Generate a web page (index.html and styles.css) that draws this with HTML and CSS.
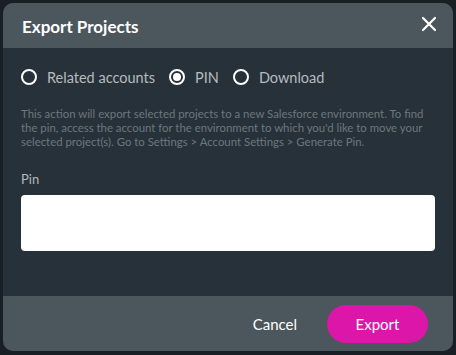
FILE: index.html
```html
<!DOCTYPE html>
<html lang="en">

<head>
	<meta charset="UTF-8">
	<meta name="viewport" content="width=device-width, initial-scale=1.0">
	<title>Export Projects</title>
	<link rel="stylesheet" href="styles.css">
</head>

<body>
	<div class="modal">
		<div class="modal-header">
			<h2>Export Projects</h2>
			<button class="close" aria-label="Close">
				<svg width="16" height="16" viewBox="0 0 16 16">
					<path d="M2 2 L14 14 M14 2 L2 14" stroke="#fff" stroke-width="2.2" stroke-linecap="round" fill="none" />
				</svg>
			</button>
		</div>

		<div class="modal-body">
			<div class="options">
				<label class="option"><span class="radio"></span>Related accounts</label>
				<label class="option"><span class="radio checked"></span>PIN</label>
				<label class="option"><span class="radio"></span>Download</label>
			</div>

			<p class="hint">This action will export selected projects to a new Salesforce environment. To find the pin, access the account for the environment to which you'd like to move your selected project(s). Go to Settings &gt; Account Settings &gt; Generate Pin.</p>

			<label class="field-label" for="pin">Pin</label>
			<input type="text" id="pin" class="pin-input">
		</div>

		<div class="modal-footer">
			<button class="btn-cancel">Cancel</button>
			<button class="btn-export">Export</button>
		</div>
	</div>
</body>

</html>
```

FILE: styles.css
```css
* {
	margin: 0;
	padding: 0;
	box-sizing: border-box;
}

body {
	font-family: Lato, 'Open Sans', sans-serif;
	background: #182026;
	padding: 3px;
	height: 355px;
}

.modal {
	width: 450px;
	height: 348px;
	border-radius: 10px;
	overflow: hidden;
	background: #27313a;
	display: flex;
	flex-direction: column;
}

.modal-header {
	height: 45px;
	background: #4b575d;
	display: flex;
	align-items: center;
	justify-content: space-between;
	padding: 2px 14px 0 19px;
}

.modal-header h2 {
	color: #fff;
	font-size: 17px;
	font-weight: 700;
}

.close {
	background: none;
	border: none;
	width: 20px;
	height: 20px;
	display: flex;
	align-items: center;
	justify-content: center;
	margin-top: -6px;
}

.modal-body {
	flex: 1;
	padding: 20px 18px 0 18px;
}

.options {
	display: flex;
	gap: 14px;
	height: 18px;
	align-items: center;
}

.option {
	display: flex;
	align-items: center;
	gap: 10px;
	color: #b6bbbe;
	font-size: 14.5px;
}

.radio {
	width: 16px;
	height: 16px;
	border: 2px solid #fff;
	border-radius: 50%;
	display: flex;
	align-items: center;
	justify-content: center;
}

.radio.checked::after {
	content: '';
	width: 8px;
	height: 8px;
	border-radius: 50%;
	background: #fff;
}

.hint {
	margin-top: 21px;
	color: #6c777d;
	font-size: 11.4px;
	line-height: 14px;
}

.field-label {
	display: block;
	margin-top: 22px;
	color: #b3b8bb;
	font-size: 13px;
}

.pin-input {
	display: block;
	margin-top: 8px;
	width: 414px;
	height: 56px;
	border: none;
	border-radius: 4px;
	background: #fff;
}

.modal-footer {
	height: 55px;
	background: #4b575d;
	display: flex;
	align-items: center;
	justify-content: flex-end;
	padding: 1px 25px 0 0;
	gap: 30px;
}

.btn-cancel {
	background: none;
	border: none;
	color: #fff;
	font-family: inherit;
	font-size: 15px;
}

.btn-export {
	width: 101px;
	height: 38px;
	border: none;
	border-radius: 19px;
	background: #dc16a8;
	color: #fff;
	font-family: inherit;
	font-size: 15px;
}
```
